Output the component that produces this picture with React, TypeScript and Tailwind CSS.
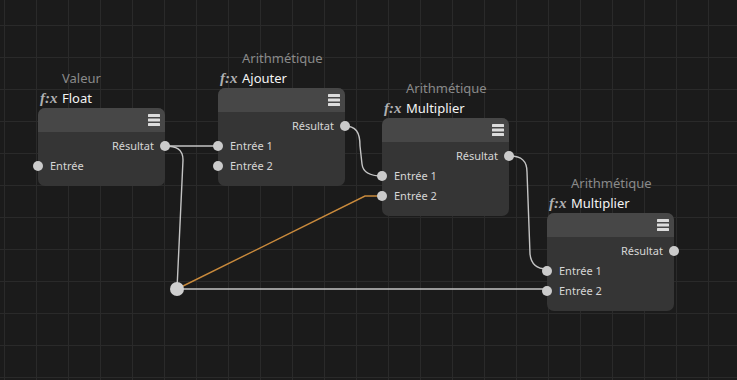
import React from 'react';

type Port = { label: string; out?: boolean };

type NodeDef = {
  id: string;
  category: string;
  name: string;
  pos: string;
  ports: Port[];
};

const NODES: NodeDef[] = [
  {
    id: 'float',
    category: 'Valeur',
    name: 'Float',
    pos: 'left-[38px] top-[108px]',
    ports: [{ label: 'Résultat', out: true }, { label: 'Entrée' }],
  },
  {
    id: 'add',
    category: 'Arithmétique',
    name: 'Ajouter',
    pos: 'left-[218px] top-[88px]',
    ports: [{ label: 'Résultat', out: true }, { label: 'Entrée 1' }, { label: 'Entrée 2' }],
  },
  {
    id: 'mul1',
    category: 'Arithmétique',
    name: 'Multiplier',
    pos: 'left-[382px] top-[118px]',
    ports: [{ label: 'Résultat', out: true }, { label: 'Entrée 1' }, { label: 'Entrée 2' }],
  },
  {
    id: 'mul2',
    category: 'Arithmétique',
    name: 'Multiplier',
    pos: 'left-[547px] top-[213px]',
    ports: [{ label: 'Résultat', out: true }, { label: 'Entrée 1' }, { label: 'Entrée 2' }],
  },
];

const MenuIcon = () => (
  <svg width="12" height="12" viewBox="0 0 12 12" className="absolute right-[5px] top-[6px]">
    <rect x="0" y="0" width="12" height="3" rx="0.5" fill="#dcdcdc" />
    <rect x="0" y="4.5" width="12" height="3" rx="0.5" fill="#dcdcdc" />
    <rect x="0" y="9" width="12" height="3" rx="0.5" fill="#dcdcdc" />
  </svg>
);

const GraphNode = ({ node }: { node: NodeDef }) => (
  <div className={`absolute w-[127px] ${node.pos}`}>
    {/* titles above the card */}
    <div className="absolute bottom-full left-0 w-[200px]">
      <div className="h-[18px] pl-[24px] text-[13px] leading-[18px] text-[#8a8a8a]">{node.category}</div>
      <div className="mt-[1px] flex h-[20px] items-center">
        <span className="w-[24px] pl-[2px] font-['Liberation_Serif',serif] text-[15px] font-bold italic leading-[18px] text-[#b0b0b0]">
          f:x
        </span>
        <span className="text-[13px] leading-[18px] text-[#f4f4f4]">{node.name}</span>
      </div>
    </div>

    {/* card */}
    <div className="rounded-[7px] bg-[#353535] pb-[10px]">
      <div className="relative h-[24px] rounded-t-[7px] bg-[#474747]">
        <MenuIcon />
      </div>
      <div className="pt-[4px]">
        {node.ports.map((p) => (
          <div key={p.label} className="relative flex h-[20px] items-center text-[11px] text-[#d6d6d6]">
            {p.out ? (
              <>
                <span className="ml-auto mr-[11px]">{p.label}</span>
                <span className="absolute right-[-5px] top-[5px] h-[10px] w-[10px] rounded-full bg-[#cbcbcb]" />
              </>
            ) : (
              <>
                <span className="absolute left-[-5px] top-[5px] h-[10px] w-[10px] rounded-full bg-[#cbcbcb]" />
                <span className="ml-[12px]">{p.label}</span>
              </>
            )}
          </div>
        ))}
      </div>
    </div>
  </div>
);

export default function App() {
  return (
    <div className="relative h-[380px] w-[737px] overflow-hidden bg-[#1b1b1b] bg-[linear-gradient(to_right,#2a2a2a_1px,transparent_1px),linear-gradient(to_bottom,#2a2a2a_1px,transparent_1px)] bg-[size:32px_32px] bg-[position:4px_25px] font-['Noto_Sans',sans-serif]">
      {/* wires */}
      <svg className="absolute inset-0" width="737" height="380" fill="none">
        <g stroke="#c4c4c4" strokeWidth="1.4">
          <path d="M165 146 L217 146" />
          <path d="M165 146 C176 146 183 149 183 160 L177 289" />
          <path d="M177 289 L547 289" />
          <path d="M344 126 C356 126 360 132 360 146 L362 164 C363 173 370 176 382 176" />
          <path d="M510 156 C522 156 527 161 527 172 L530 254 C531 264 537 269 547 269" />
        </g>
        <path d="M177 289 L365 196 L382 196" stroke="#c98a3c" strokeWidth="1.4" />
        <circle cx="177" cy="289" r="7" fill="#cfcfcf" />
      </svg>

      {NODES.map((n) => (
        <GraphNode key={n.id} node={n} />
      ))}
    </div>
  );
}
